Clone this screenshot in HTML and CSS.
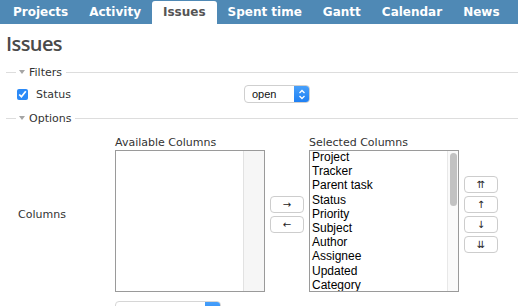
FILE: index.html
```html
<!DOCTYPE html>
<html lang="en">
<head>
  <meta charset="UTF-8" />
  <title>Issues</title>
  <link rel="stylesheet" href="styles.css">
</head>
<body>

<nav class="main-menu">
  <ul>
    <li><a href="#">Projects</a></li>
    <li><a href="#">Activity</a></li>
    <li><a href="#" class="selected">Issues</a></li>
    <li><a href="#">Spent time</a></li>
    <li><a href="#">Gantt</a></li>
    <li><a href="#">Calendar</a></li>
    <li><a href="#">News</a></li>
  </ul>
</nav>

<div class="content">
  <h2>Issues</h2>

  <fieldset class="collapsible">
    <legend>Filters</legend>
    <div class="filter-row">
      <label class="filter-field"><input type="checkbox" checked /> Status</label>
      <div class="select select-open">
        <span class="select-value">open</span>
        <span class="select-arrow">
          <svg width="8" height="11" viewBox="0 0 8 11"><path d="M1.5 4 L4 1.5 L6.5 4 M1.5 7 L4 9.5 L6.5 7" fill="none" stroke="#fff" stroke-width="1.3"/></svg>
        </span>
      </div>
    </div>
  </fieldset>

  <fieldset class="collapsible">
    <legend>Options</legend>
    <div class="option-row">
      <div class="option-label">Columns</div>

      <div class="column-block">
        <div class="column-title">Available Columns</div>
        <div class="listbox">
          <ul class="listbox-items"></ul>
          <div class="scroll-track scroll-empty"></div>
        </div>
      </div>

      <div class="move-buttons">
        <button type="button">&rarr;</button>
        <button type="button">&larr;</button>
      </div>

      <div class="column-block">
        <div class="column-title">Selected Columns</div>
        <div class="listbox">
          <ul class="listbox-items">
            <li>Project</li>
            <li>Tracker</li>
            <li>Parent task</li>
            <li>Status</li>
            <li>Priority</li>
            <li>Subject</li>
            <li>Author</li>
            <li>Assignee</li>
            <li>Updated</li>
            <li>Category</li>
          </ul>
          <div class="scroll-track"><div class="scroll-thumb"></div></div>
        </div>
      </div>

      <div class="move-buttons">
        <button type="button">&#8648;</button>
        <button type="button">&uarr;</button>
        <button type="button">&darr;</button>
        <button type="button">&#8650;</button>
      </div>
    </div>

    <div class="option-row group-row">
      <div class="option-label"></div>
      <div class="select select-group">
        <span class="select-value"></span>
        <span class="select-arrow"></span>
      </div>
    </div>
  </fieldset>
</div>

</body>
</html>
```

FILE: styles.css
```css
body {
  margin: 0;
  font-family: 'DejaVu Sans', Verdana, sans-serif;
  font-size: 11px;
  color: #333;
  background: #fff;
  overflow: hidden;
}

.main-menu {
  height: 24px;
  background-color: #4f89b5;
}

.main-menu ul {
  display: flex;
  margin: 0;
  padding: 0 0 0 3px;
  list-style: none;
}

.main-menu li {
  margin-right: 1px;
}

.main-menu a {
  display: block;
  margin-top: 1px;
  padding: 0 10px;
  line-height: 23px;
  font-size: 12px;
  font-weight: bold;
  color: #fff;
  text-decoration: none;
  border-radius: 3px 3px 0 0;
}

.main-menu a.selected {
  padding: 0 11px;
  background-color: #fff;
  color: #555;
}

.content {
  padding-left: 6px;
}

h2 {
  margin: 8px 0 10px;
  font-family: 'Open Sans', sans-serif;
  font-size: 20px;
  font-weight: 600;
  line-height: 24px;
  letter-spacing: -0.6px;
  color: #4a4a4a;
}

fieldset.collapsible {
  margin: 0;
  min-inline-size: 0;
  border: 0;
  border-top: 1px solid #ddd;
  padding: 6px 0 4px 10px;
}

fieldset.collapsible + fieldset.collapsible {
  margin-top: 5px;
  padding-top: 11px;
}

legend {
  padding: 0 4px 0 3px;
  line-height: 13px;
  color: #333;
}

legend::before {
  content: "";
  display: inline-block;
  vertical-align: 2px;
  margin-right: 4px;
  border-left: 3.5px solid transparent;
  border-right: 3.5px solid transparent;
  border-top: 4px solid #a5a5a5;
}

.filter-row {
  display: flex;
  align-items: center;
}

.filter-field {
  display: flex;
  align-items: center;
  width: 228px;
}

.filter-field input {
  width: 11px;
  height: 11px;
  margin: 0 8px 0 1px;
  accent-color: #2b8af7;
}

.select {
  display: flex;
  height: 18px;
  box-sizing: border-box;
  border: 1px solid #cfcfcf;
  border-radius: 4px;
  background: #fff;
  overflow: hidden;
  font-family: 'Liberation Sans', Arial, sans-serif;
  font-size: 11px;
  color: #111;
}

.select-value {
  flex: 1;
  padding-left: 7px;
  line-height: 16px;
}

.select-arrow {
  display: flex;
  align-items: center;
  justify-content: center;
  width: 16px;
  margin: -1px -1px -1px 0;
  background: linear-gradient(#4aa2fb, #1c7ef3);
}

.select-open {
  width: 66px;
}

.select-group {
  width: 106px;
  border-color: #d6d6d6;
}

.option-row {
  display: flex;
  align-items: center;
}

.option-label {
  width: 97px;
  padding-left: 2px;
  flex-shrink: 0;
}

.column-title {
  line-height: 14px;
}

.listbox {
  display: flex;
  width: 150px;
  height: 142px;
  box-sizing: border-box;
  border: 1px solid #9a9a9a;
  background: #fff;
}

.listbox-items {
  flex: 1;
  margin: -1px 0 0;
  padding: 0 0 0 2px;
  list-style: none;
  overflow: hidden;
  font-family: 'Liberation Sans', Arial, sans-serif;
  font-size: 12px;
  line-height: 14.2px;
  color: #000;
}

.scroll-track {
  width: 10px;
  border-left: 1px solid #e8e8e8;
  background: #fafafa;
}

.scroll-empty {
  width: 20px;
  background: #f6f6f6;
  border-left-color: #e2e2e2;
}

.scroll-thumb {
  width: 7px;
  height: 53px;
  margin: 2px 0 0 2px;
  border-radius: 4px;
  background: #c2c2c2;
}

.move-buttons {
  display: flex;
  flex-direction: column;
  gap: 3px;
  margin: 0 5px;
}

.move-buttons button {
  width: 34px;
  height: 17px;
  padding: 0;
  border: 1px solid #cdcdcd;
  border-radius: 4px;
  background: #fff;
  font-family: 'DejaVu Sans', sans-serif;
  font-size: 10px;
  line-height: 15px;
  color: #222;
}

.group-row {
  margin-top: 9px;
}
```
